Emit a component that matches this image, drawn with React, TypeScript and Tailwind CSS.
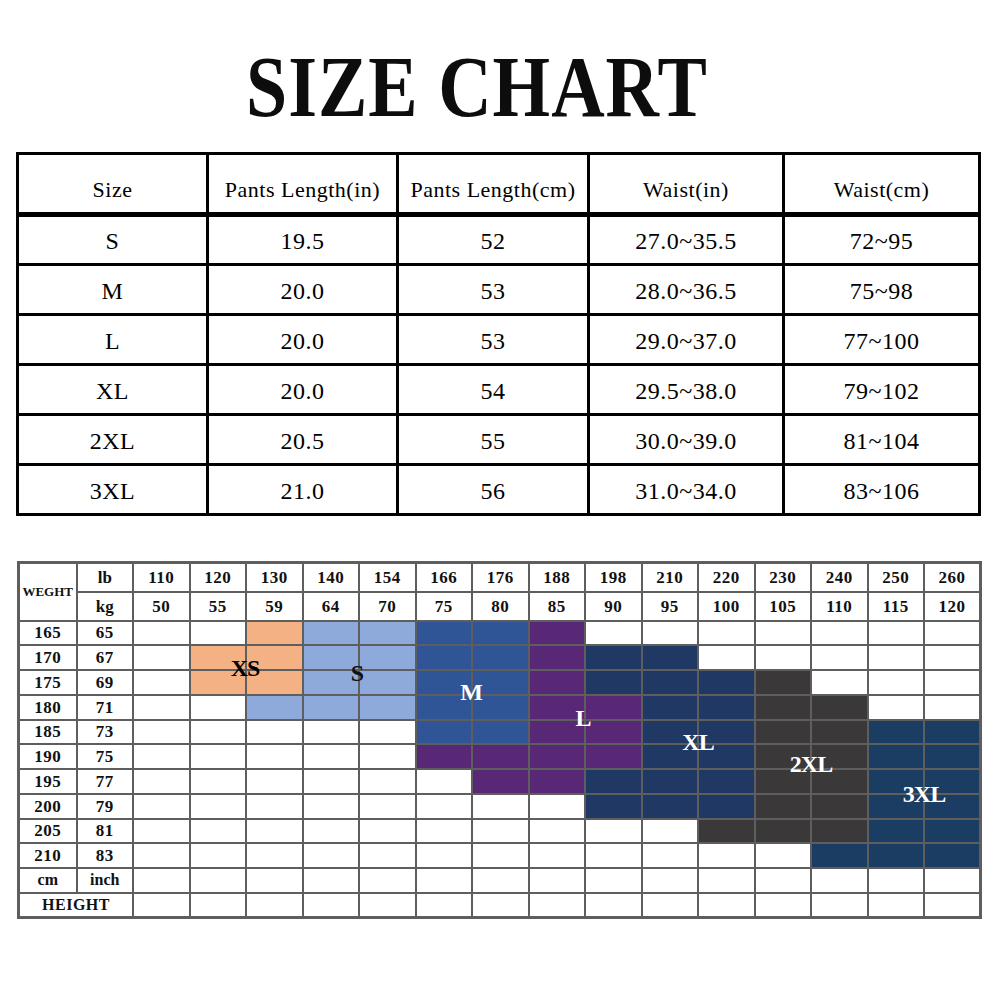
const serif = { fontFamily: '"Liberation Serif", "Times New Roman", serif' }

const sizeRows = [
  ["S", "19.5", "52", "27.0~35.5", "72~95"],
  ["M", "20.0", "53", "28.0~36.5", "75~98"],
  ["L", "20.0", "53", "29.0~37.0", "77~100"],
  ["XL", "20.0", "54", "29.5~38.0", "79~102"],
  ["2XL", "20.5", "55", "30.0~39.0", "81~104"],
  ["3XL", "21.0", "56", "31.0~34.0", "83~106"],
]

const lbs = ["110", "120", "130", "140", "154", "166", "176", "188", "198", "210", "220", "230", "240", "250", "260"]
const kgs = ["50", "55", "59", "64", "70", "75", "80", "85", "90", "95", "100", "105", "110", "115", "120"]

// one letter per cell: . white, o XS, s S, m M, l L, x XL, d 2XL, t 3XL
const heights = [
  { cm: "165", inch: "65", fill: "..ossmml......." },
  { cm: "170", inch: "67", fill: ".oossmmlxx....." },
  { cm: "175", inch: "69", fill: ".oossmmlxxxd..." },
  { cm: "180", inch: "71", fill: "..sssmmllxxdd.." },
  { cm: "185", inch: "73", fill: ".....mmllxxddtt" },
  { cm: "190", inch: "75", fill: ".....llllxxddtt" },
  { cm: "195", inch: "77", fill: "......llxxxddtt" },
  { cm: "200", inch: "79", fill: "........xxxddtt" },
  { cm: "205", inch: "81", fill: "..........dddtt" },
  { cm: "210", inch: "83", fill: "............ttt" },
]

const fills: Record<string, string> = {
  ".": "bg-white",
  o: "bg-[#f4b183]",
  s: "bg-[#8eaadb]",
  m: "bg-[#2f5597]",
  l: "bg-[#582776]",
  x: "bg-[#203864]",
  d: "bg-[#3a3838]",
  t: "bg-[#1b3d63]",
}

const labels = [
  { text: "XS", pos: "left-[228px] top-[107px]", color: "text-black" },
  { text: "S", pos: "left-[340px] top-[112px]", color: "text-[#111]" },
  { text: "M", pos: "left-[454px] top-[131px]", color: "text-white" },
  { text: "L", pos: "left-[566px] top-[157px]", color: "text-white" },
  { text: "XL", pos: "left-[681px] top-[181px]", color: "text-white" },
  { text: "2XL", pos: "left-[794px] top-[203px]", color: "text-white" },
  { text: "3XL", pos: "left-[907px] top-[233px]", color: "text-white" },
]

function SizeTable() {
  const head = ["Size", "Pants Length(in)", "Pants Length(cm)", "Waist(in)", "Waist(cm)"]
  return (
    <table className="table-fixed border-collapse border-[3px] border-black w-[962px] text-black" style={serif}>
      <colgroup>
        <col className="w-[190px]" />
        <col className="w-[190px]" />
        <col className="w-[191px]" />
        <col className="w-[195px]" />
        <col className="w-[196px]" />
      </colgroup>
      <thead>
        <tr className="h-[61px]">
          {head.map((h) => (
            <th key={h} className="border-[3px] border-b-[5px] border-black pt-3 text-[22px] font-normal tracking-[0.5px]">
              {h}
            </th>
          ))}
        </tr>
      </thead>
      <tbody>
        {sizeRows.map((row) => (
          <tr key={row[0]} className="h-[50px]">
            {row.map((v, i) => (
              <td key={i} className="border-[3px] border-black text-center text-[24px] tracking-[0.5px] pt-0.5">
                {v}
              </td>
            ))}
          </tr>
        ))}
      </tbody>
    </table>
  )
}

function FitGrid() {
  const cell = "border-2 border-[#5e5e5e] text-center font-bold p-0 leading-none"
  return (
    <div className="relative w-[962px]">
      <table className="table-fixed border-collapse border-[3px] border-[#5e5e5e] w-[962px] text-[#111]" style={serif}>
        <colgroup>
          <col className="w-[58px]" />
          {Array.from({ length: 16 }).map((_, i) => (
            <col key={i} className="w-[56.5px]" />
          ))}
        </colgroup>
        <tbody>
          <tr className="h-[29px]">
            <td rowSpan={2} className={`${cell} text-[13px]`}>WEGHT</td>
            <td className={`${cell} text-[17px]`}>lb</td>
            {lbs.map((v, i) => (
              <td key={i} className={`${cell} text-[17px] tracking-[0.5px]`}>{v}</td>
            ))}
          </tr>
          <tr className="h-[29px]">
            <td className={`${cell} text-[17px]`}>kg</td>
            {kgs.map((v, i) => (
              <td key={i} className={`${cell} text-[17px] tracking-[0.5px]`}>{v}</td>
            ))}
          </tr>
          {heights.map((h) => (
            <tr key={h.cm} className="h-[24.75px]">
              <td className={`${cell} text-[17px] tracking-[0.5px]`}>{h.cm}</td>
              <td className={`${cell} text-[17px] tracking-[0.5px]`}>{h.inch}</td>
              {h.fill.split("").map((f, i) => (
                <td key={i} className={`${cell} ${fills[f]}`}></td>
              ))}
            </tr>
          ))}
          <tr className="h-[24.75px]">
            <td className={`${cell} text-[16px]`}>cm</td>
            <td className={`${cell} text-[16px]`}>inch</td>
            {lbs.map((_, i) => (
              <td key={i} className={cell}></td>
            ))}
          </tr>
          <tr className="h-[24.75px]">
            <td colSpan={2} className={`${cell} text-[16px] tracking-[0.5px]`}>HEIGHT</td>
            {lbs.map((_, i) => (
              <td key={i} className={cell}></td>
            ))}
          </tr>
        </tbody>
      </table>
      {labels.map((l) => (
        <span
          key={l.text}
          className={`absolute ${l.pos} ${l.color} -translate-x-1/2 -translate-y-1/2 text-[24px] font-bold leading-none tracking-[-1px]`}
          style={serif}
        >
          {l.text}
        </span>
      ))}
    </div>
  )
}

export default function App() {
  return (
    <div className="w-[1001px] h-[1001px] bg-white overflow-hidden">
      <div className="pt-[49px] pl-[246px]">
        <h1 className="inline-block text-[74px] leading-none font-bold tracking-[1px] scale-y-[1.18] text-[#0d0d0d]" style={serif}>
          SIZE CHART
        </h1>
      </div>
      <div className="mt-[29px] pl-[16px]">
        <SizeTable />
      </div>
      <div className="mt-[45px] pl-[17px]">
        <FitGrid />
      </div>
    </div>
  )
}
